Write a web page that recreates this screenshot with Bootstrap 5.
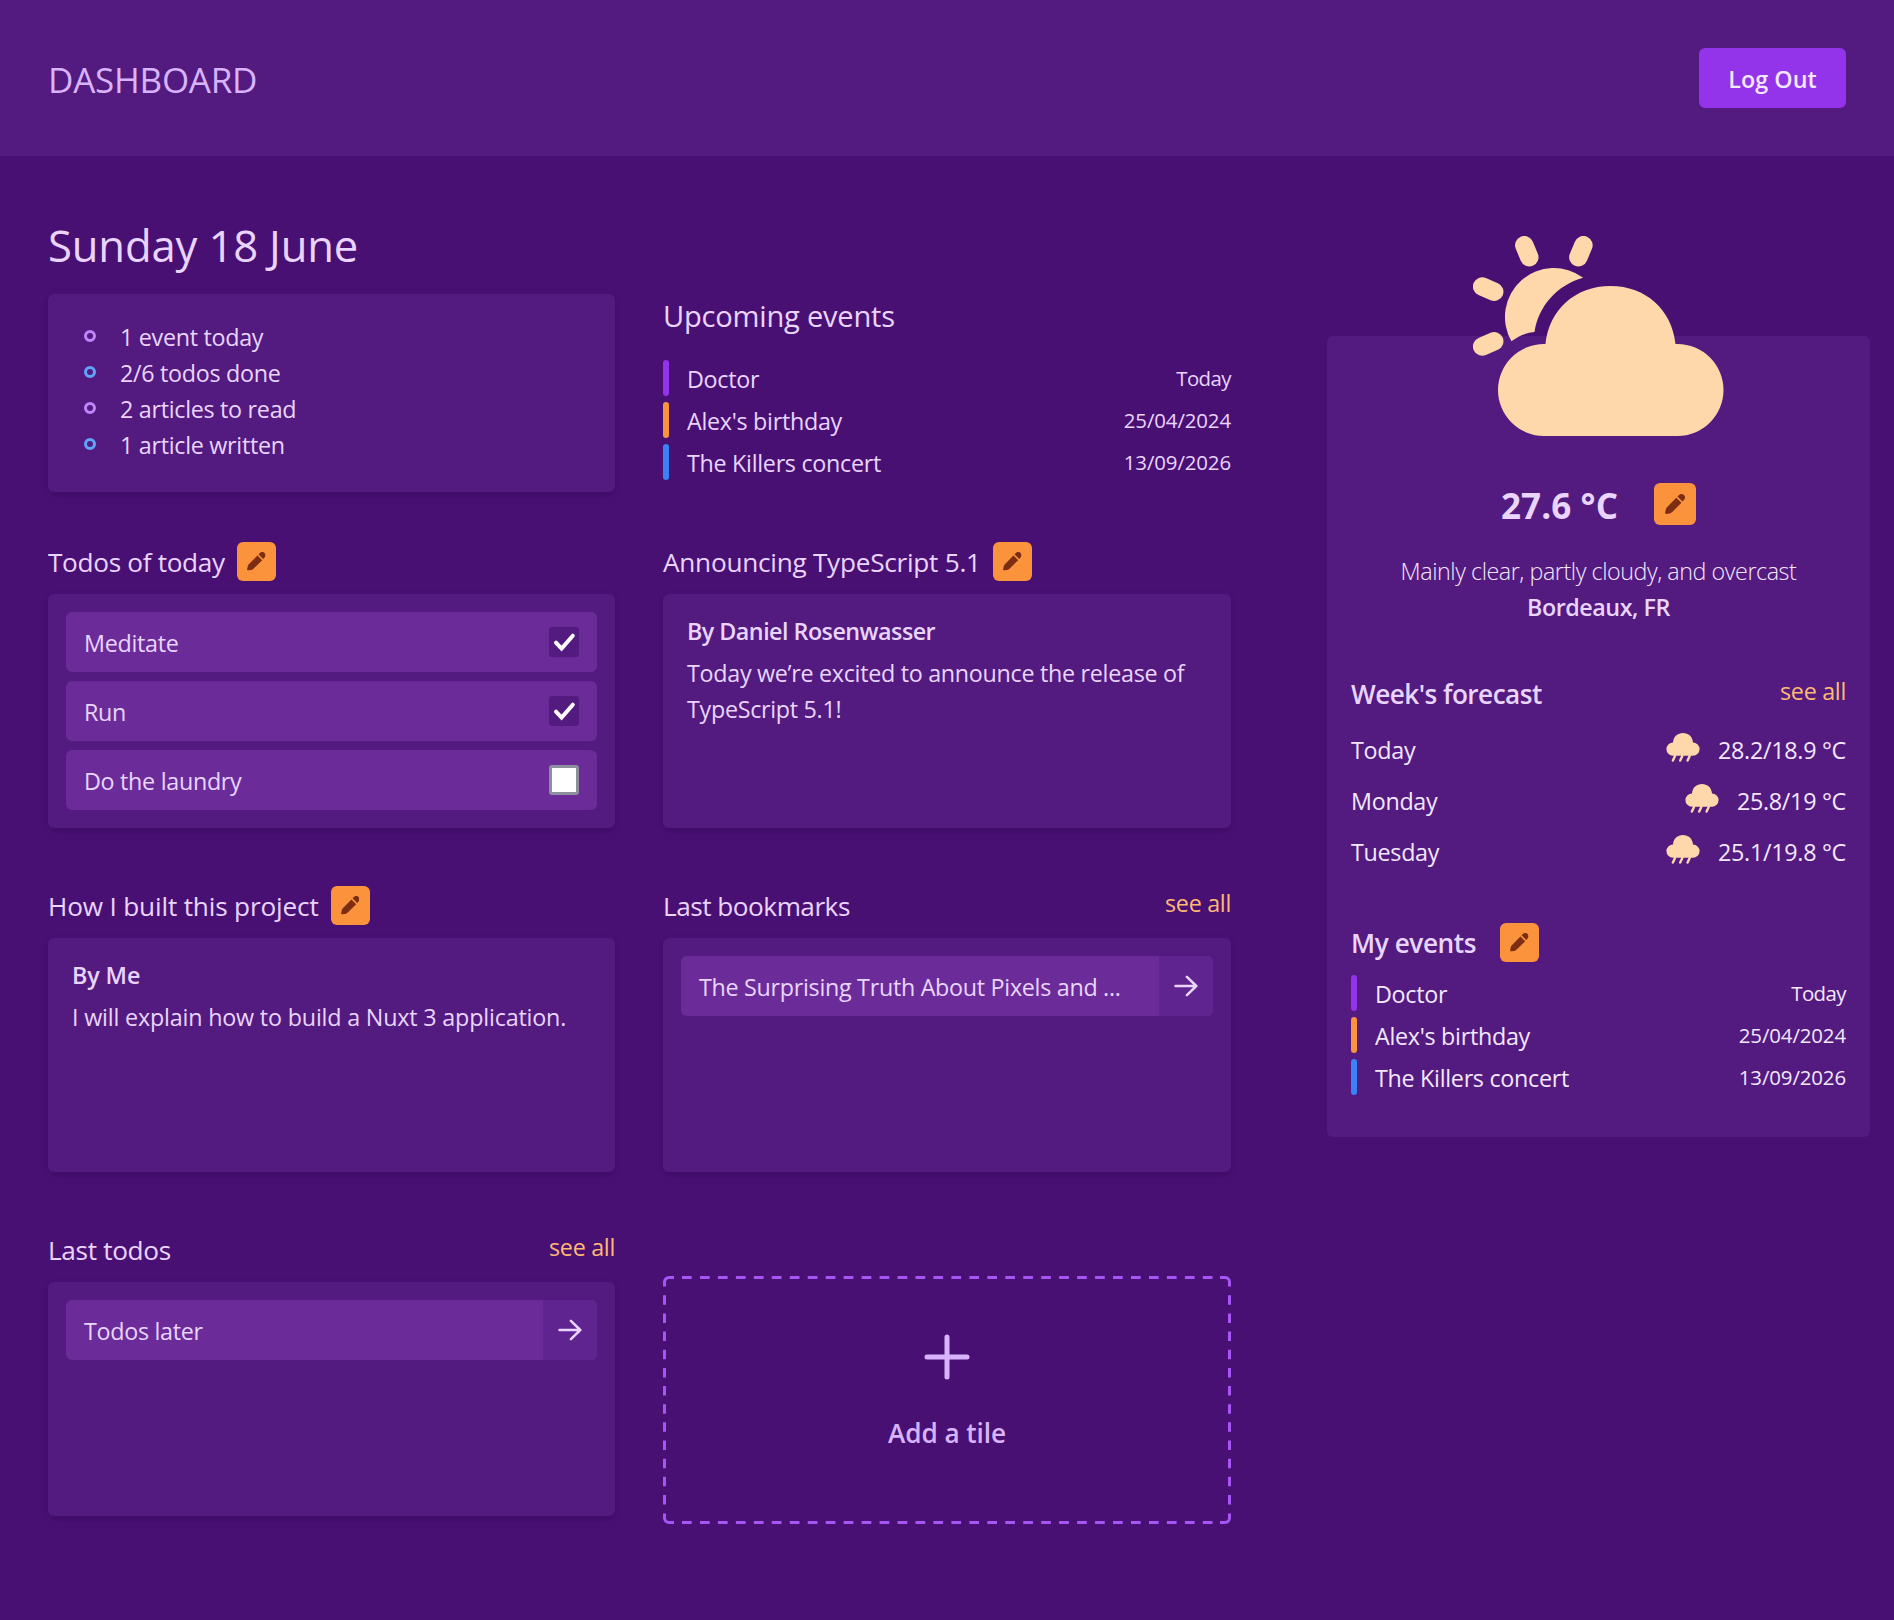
<!DOCTYPE html>
<html lang="en">
<head>
<meta charset="utf-8">
<meta name="viewport" content="width=device-width, initial-scale=1">
<title>Dashboard</title>
<link rel="stylesheet" href="https://cdn.jsdelivr.net/npm/bootstrap@5.3.0/dist/css/bootstrap.min.css">
<style>
  :root {
    --ink: #e9d5ff;
    --ink-light: #f3e8ff;
    --page: #491074;
    --panel: #531a7f;
    --entry: #6b2c9a;
    --entry-end: #602491;
  }
  body {
    min-height: 100vh;
    background: var(--page);
    color: var(--ink);
    font-family: "Open Sans", "Noto Sans", sans-serif;
    font-size: 23.3px;
    letter-spacing: -.29px;
    line-height: 36px;
  }
  h1, h2, h3, p, ul { margin: 0; line-height: inherit; }
  .topbar { height: 156px; padding: 0 48px; background: var(--panel); }
  .brand { font-size: 35px; letter-spacing: -.25px; color: #d8b4fe; padding-top: 4px; }
  .btn-logout {
    width: 147px; height: 60px; padding: 3px 0 0; border: 0; border-radius: 6px;
    background: #9333ea; color: var(--ink-light);
    font-size: 23.3px; font-weight: 600; letter-spacing: .05px;
  }
  .board { padding: 62px 24px 0 48px; gap: 96px; }
  .tiles { width: 1183px; }
  .tiles > .row { --bs-gutter-x: 48px; margin-bottom: 58px; }
  .tiles > .row.first { margin-bottom: 50px; }
  .tiles > .row > :first-child { width: 615px; }
  .tiles > .row > :last-child { width: 616px; }

  .day { font-size: 43.6px; font-weight: 400; letter-spacing: -.15px; line-height: 54px; margin-bottom: 22px; }
  .panel { background: var(--panel); border-radius: 6px; box-shadow: 0 6px 9px -1.5px rgba(0,0,0,.08), 0 3px 6px -3px rgba(0,0,0,.08), 0 0 6px rgba(0,0,0,.05); }
  .summary { height: 198px; padding: 25px 36px 0; }
  .summary li { gap: 24px; }
  .bullet { width: 12px; height: 12px; border: 3px solid #c084fc; border-radius: 50%; margin-bottom: 3px; }
  li:nth-child(even) > .bullet { border-color: #60a5fa; }

  .upcoming { padding-top: 80px; }
  .upcoming h2 { font-size: 29.1px; font-weight: 400; letter-spacing: -.22px; margin-bottom: 26px; }
  .events { gap: 6px; }
  .events li { gap: 18px; height: 36px; }
  .bar { width: 6px; height: 36px; border-radius: 3px; }
  .bar-a { background: #9333ea; }
  .bar-b { background: #fb923c; }
  .bar-c { background: #3b82f6; }
  .events .label { flex: 1; padding-top: 1px; }
  .events time { font-size: 20.4px; letter-spacing: -.1px; line-height: 37px; }
  .events time.word { letter-spacing: -.55px; }

  .tile-head { height: 39px; margin-bottom: 13px; gap: 12px; }
  .tile-head h2 { font-size: 26.2px; font-weight: 400; letter-spacing: -.33px; }
  .tile-head h2.airy { letter-spacing: -.26px; }
  .tile-head h2.airier { letter-spacing: -.17px; }
  .tile-head h2.snug { letter-spacing: -.5px; }
  .see-all { color: #fdba74; text-decoration: none; letter-spacing: -.3px; padding-bottom: 5px; }
  .btn-edit {
    width: 39px; height: 39px; padding: 0; border: 0; border-radius: 6px;
    background: #fb923c; color: #7c2d12;
  }
  .btn-edit:hover { background: #fb923c; color: #7c2d12; }
  .btn-edit svg { width: 18.5px; height: 18.5px; }
  .tile-body { height: 234px; padding: 18px; gap: 9px; }
  .article { padding: 19px 24px; }
  .article h3 { font-size: 23.3px; font-weight: 600; letter-spacing: -.52px; margin-bottom: 6px; }
  .article h3.airy { letter-spacing: -.1px; }
  .article p.airy { letter-spacing: -.18px; }
  .entry { height: 60px; padding: 0 18px; border-radius: 6px; background: var(--entry); overflow: hidden; }
  .entry.link { padding-right: 0; }
  .entry > span { padding-top: 1px; }
  .entry-go { width: 54px; height: 60px; background: var(--entry-end); }
  .tick { width: 30px; height: 30px; border-radius: 3px; background: var(--panel); }
  .tick.empty { background: #fff; border: 3px solid #8e8f9c; }

  .add-tile { height: 248px; margin-top: 46px; color: #d8b4fe; gap: 35px; padding-bottom: 16px; }
  .add-tile .outline { position: absolute; inset: 0; width: 100%; height: 100%; }
  .add-tile span { font-size: 26.2px; font-weight: 600; letter-spacing: -.08px; }

  .weather { width: 543px; height: 801px; margin-top: 118px; padding: 0 24px; background: var(--panel); border-radius: 6px; color: var(--ink-light); }
  .sky { width: 251px; height: 200px; margin: -100px auto 47px; fill: #fed7aa; }
  .now { height: 42px; gap: 36px; margin-bottom: 28px; }
  .now .temp { font-size: 35px; font-weight: 700; letter-spacing: .1px; color: var(--ink); padding-top: 3px; }
  .now .btn-edit { width: 42px; height: 42px; }
  .now .btn-edit svg { width: 20px; height: 20px; }
  .sky-text { font-weight: 300; letter-spacing: -.44px; }
  .city { font-weight: 600; letter-spacing: -.45px; color: var(--ink); }
  .side-title { font-size: 26.2px; font-weight: 600; letter-spacing: -.55px; color: var(--ink); }
  .mine .side-title { letter-spacing: -.42px; }
  .forecast-head { margin: 49px 0 22px; height: 36px; }
  .forecast-head .side-title { padding-top: 3px; }
  .forecast-head .see-all { padding-bottom: 2px; }
  .forecast { gap: 15px; }
  .forecast svg { width: 34px; height: 29px; margin: 0 18px 5px 0; fill: #fed7aa; }
  .mine { margin: 53px 0 13px; height: 39px; gap: 24px; }
</style>
</head>
<body>
<svg class="d-none" aria-hidden="true">
  <symbol id="i-pencil" viewBox="0 0 20 20">
    <path fill="currentColor" d="M11.300 3.700 16.400 8.800 7 18.200Q6 19.100 4.700 19.400L.9 20Q0 20 .1 19.100L.8 15.400Q1.100 14.100 2 13.200zM12.500 2.500 14 1.100a3.500 3.500 0 0 1 4.900 0 3.500 3.500 0 0 1 0 4.900l-1.400 1.500z"/>
  </symbol>
  <symbol id="i-rain" viewBox="0 0 34 29">
    <path d="M7 9.500C7.500 3.500 11.500 0 17 0s9.500 3.500 10 9.500a6.600 6.600 0 0 1 0 13.200H7a6.600 6.600 0 0 1 0-13.200z"/>
    <path d="M9 23 6.900 27.600M16.300 23l-2.100 4.600M23.700 23l-2.100 4.600" stroke="#fed7aa" stroke-width="2.400" stroke-linecap="round"/>
  </symbol>
  <symbol id="i-arrow" viewBox="0 0 24 22">
    <path d="M1.500 11H22.300M12.900 1.900 22.300 11l-9.400 9.100" fill="none" stroke="currentColor" stroke-width="2.500" stroke-linecap="round" stroke-linejoin="round"/>
  </symbol>
  <symbol id="i-check" viewBox="0 0 30 30">
    <path d="M7 15.600l5.600 6L23.800 8.700" fill="none" stroke="#fff" stroke-width="4" stroke-linecap="round"/>
  </symbol>
</svg>

<header class="topbar d-flex align-items-center justify-content-between">
  <div class="brand">DASHBOARD</div>
  <button class="btn btn-logout" type="button">Log Out</button>
</header>

<main class="board d-flex align-items-start">
  <div class="tiles flex-shrink-0">
    <div class="row first">
      <section class="col-6">
        <h1 class="day">Sunday 18 June</h1>
        <div class="panel summary">
          <ul class="list-unstyled">
            <li class="d-flex align-items-center"><i class="bullet"></i>1 event today</li>
            <li class="d-flex align-items-center"><i class="bullet"></i>2/6 todos done</li>
            <li class="d-flex align-items-center"><i class="bullet"></i>2 articles to read</li>
            <li class="d-flex align-items-center"><i class="bullet"></i>1 article written</li>
          </ul>
        </div>
      </section>
      <section class="col-6 upcoming">
        <h2>Upcoming events</h2>
        <ul class="events list-unstyled d-flex flex-column">
          <li class="d-flex"><i class="bar bar-a"></i><span class="label">Doctor</span><time class="word">Today</time></li>
          <li class="d-flex"><i class="bar bar-b"></i><span class="label">Alex's birthday</span><time>25/04/2024</time></li>
          <li class="d-flex"><i class="bar bar-c"></i><span class="label">The Killers concert</span><time>13/09/2026</time></li>
        </ul>
      </section>
    </div>

    <div class="row">
      <section class="col-6">
        <div class="tile-head d-flex align-items-center">
          <h2>Todos of today</h2>
          <button class="btn btn-edit d-flex align-items-center justify-content-center" type="button" aria-label="Edit"><svg><use href="#i-pencil"/></svg></button>
        </div>
        <div class="panel tile-body d-flex flex-column">
          <div class="entry d-flex align-items-center justify-content-between"><span>Meditate</span><i class="tick d-flex"><svg width="30" height="30"><use href="#i-check"/></svg></i></div>
          <div class="entry d-flex align-items-center justify-content-between"><span>Run</span><i class="tick d-flex"><svg width="30" height="30"><use href="#i-check"/></svg></i></div>
          <div class="entry d-flex align-items-center justify-content-between"><span>Do the laundry</span><i class="tick empty"></i></div>
        </div>
      </section>
      <section class="col-6">
        <div class="tile-head d-flex align-items-center">
          <h2 class="airy">Announcing TypeScript 5.1</h2>
          <button class="btn btn-edit d-flex align-items-center justify-content-center" type="button" aria-label="Edit"><svg><use href="#i-pencil"/></svg></button>
        </div>
        <div class="panel tile-body article d-block">
          <h3>By Daniel Rosenwasser</h3>
          <p>Today we’re excited to announce the release of TypeScript 5.1!</p>
        </div>
      </section>
    </div>

    <div class="row">
      <section class="col-6">
        <div class="tile-head d-flex align-items-center">
          <h2 class="airier">How I built this project</h2>
          <button class="btn btn-edit d-flex align-items-center justify-content-center" type="button" aria-label="Edit"><svg><use href="#i-pencil"/></svg></button>
        </div>
        <div class="panel tile-body article d-block">
          <h3 class="airy">By Me</h3>
          <p class="airy">I will explain how to build a Nuxt 3 application.</p>
        </div>
      </section>
      <section class="col-6">
        <div class="tile-head d-flex align-items-center justify-content-between">
          <h2 class="snug">Last bookmarks</h2>
          <a class="see-all" href="#">see all</a>
        </div>
        <div class="panel tile-body">
          <div class="entry link d-flex align-items-center justify-content-between"><span>The Surprising Truth About Pixels and ...</span><i class="entry-go d-flex align-items-center justify-content-center"><svg width="24" height="22"><use href="#i-arrow"/></svg></i></div>
        </div>
      </section>
    </div>

    <div class="row mb-0">
      <section class="col-6">
        <div class="tile-head d-flex align-items-center justify-content-between">
          <h2>Last todos</h2>
          <a class="see-all" href="#">see all</a>
        </div>
        <div class="panel tile-body">
          <div class="entry link d-flex align-items-center justify-content-between"><span>Todos later</span><i class="entry-go d-flex align-items-center justify-content-center"><svg width="24" height="22"><use href="#i-arrow"/></svg></i></div>
        </div>
      </section>
      <section class="col-6">
        <div class="add-tile position-relative d-flex flex-column align-items-center justify-content-center">
          <svg class="outline" viewBox="0 0 568 248" preserveAspectRatio="none" fill="none" stroke="#a855f7" stroke-width="3">
            <path d="M1.500 10.500V6A4.500 4.500 0 0 1 6 1.500h5M557 1.500h5a4.500 4.500 0 0 1 4.500 4.500v4.500M566.500 237.500v4.500a4.500 4.500 0 0 1-4.500 4.500h-5M11 246.500H6a4.500 4.500 0 0 1-4.500-4.500v-4.500"/>
            <path d="M19 1.500H549.500M19 246.500H549.500" stroke-dasharray="9.700 8.260"/>
            <path d="M1.500 19.300V228.700M566.500 19.300V228.700" stroke-dasharray="9.500 8.650"/>
          </svg>
          <svg width="46" height="46" viewBox="0 0 46 46"><path d="M23 3v40M3 23h40" stroke="currentColor" stroke-width="5" stroke-linecap="round"/></svg>
          <span>Add a tile</span>
        </div>
      </section>
    </div>
  </div>

  <aside class="weather flex-shrink-0">
    <svg class="sky d-block" viewBox="153 16 251 200">
      <path d="M225.500 124C229 90 255 66 290.500 66S352 90 355.500 124H357.500a46 46 0 0 1 0 92H224a46 46 0 0 1 0-92z"/>
      <path d="M263.200 57.700A49 49 0 0 0 191.400 121.300C198.500 116 206 112.800 214.500 112C218.500 86 237 65 263.200 57.700z"/>
      <path d="M204.300 25.200l5 12M263.400 25.200l-5 12M162.200 66.500l12 5.200M162.200 126.500l12-5.200" fill="none" stroke="#fed7aa" stroke-width="18.500" stroke-linecap="round"/>
    </svg>
    <div class="now d-flex align-items-center justify-content-center">
      <span class="temp">27.6 °C</span>
      <button class="btn btn-edit d-flex align-items-center justify-content-center" type="button" aria-label="Edit"><svg><use href="#i-pencil"/></svg></button>
    </div>
    <p class="sky-text text-center">Mainly clear, partly cloudy, and overcast</p>
    <p class="city text-center">Bordeaux, FR</p>

    <div class="forecast-head d-flex align-items-center justify-content-between">
      <h2 class="side-title">Week's forecast</h2>
      <a class="see-all" href="#">see all</a>
    </div>
    <ul class="forecast list-unstyled d-flex flex-column">
      <li class="d-flex align-items-center"><span class="me-auto">Today</span><svg><use href="#i-rain"/></svg>28.2/18.9 °C</li>
      <li class="d-flex align-items-center"><span class="me-auto">Monday</span><svg><use href="#i-rain"/></svg>25.8/19 °C</li>
      <li class="d-flex align-items-center"><span class="me-auto">Tuesday</span><svg><use href="#i-rain"/></svg>25.1/19.8 °C</li>
    </ul>

    <div class="mine d-flex align-items-center">
      <h2 class="side-title">My events</h2>
      <button class="btn btn-edit d-flex align-items-center justify-content-center" type="button" aria-label="Edit"><svg><use href="#i-pencil"/></svg></button>
    </div>
    <ul class="events list-unstyled d-flex flex-column">
      <li class="d-flex"><i class="bar bar-a"></i><span class="label">Doctor</span><time class="word">Today</time></li>
      <li class="d-flex"><i class="bar bar-b"></i><span class="label">Alex's birthday</span><time>25/04/2024</time></li>
      <li class="d-flex"><i class="bar bar-c"></i><span class="label">The Killers concert</span><time>13/09/2026</time></li>
    </ul>
  </aside>
</main>
<script src="https://cdn.jsdelivr.net/npm/bootstrap@5.3.0/dist/js/bootstrap.bundle.min.js"></script>
</body>
</html>
